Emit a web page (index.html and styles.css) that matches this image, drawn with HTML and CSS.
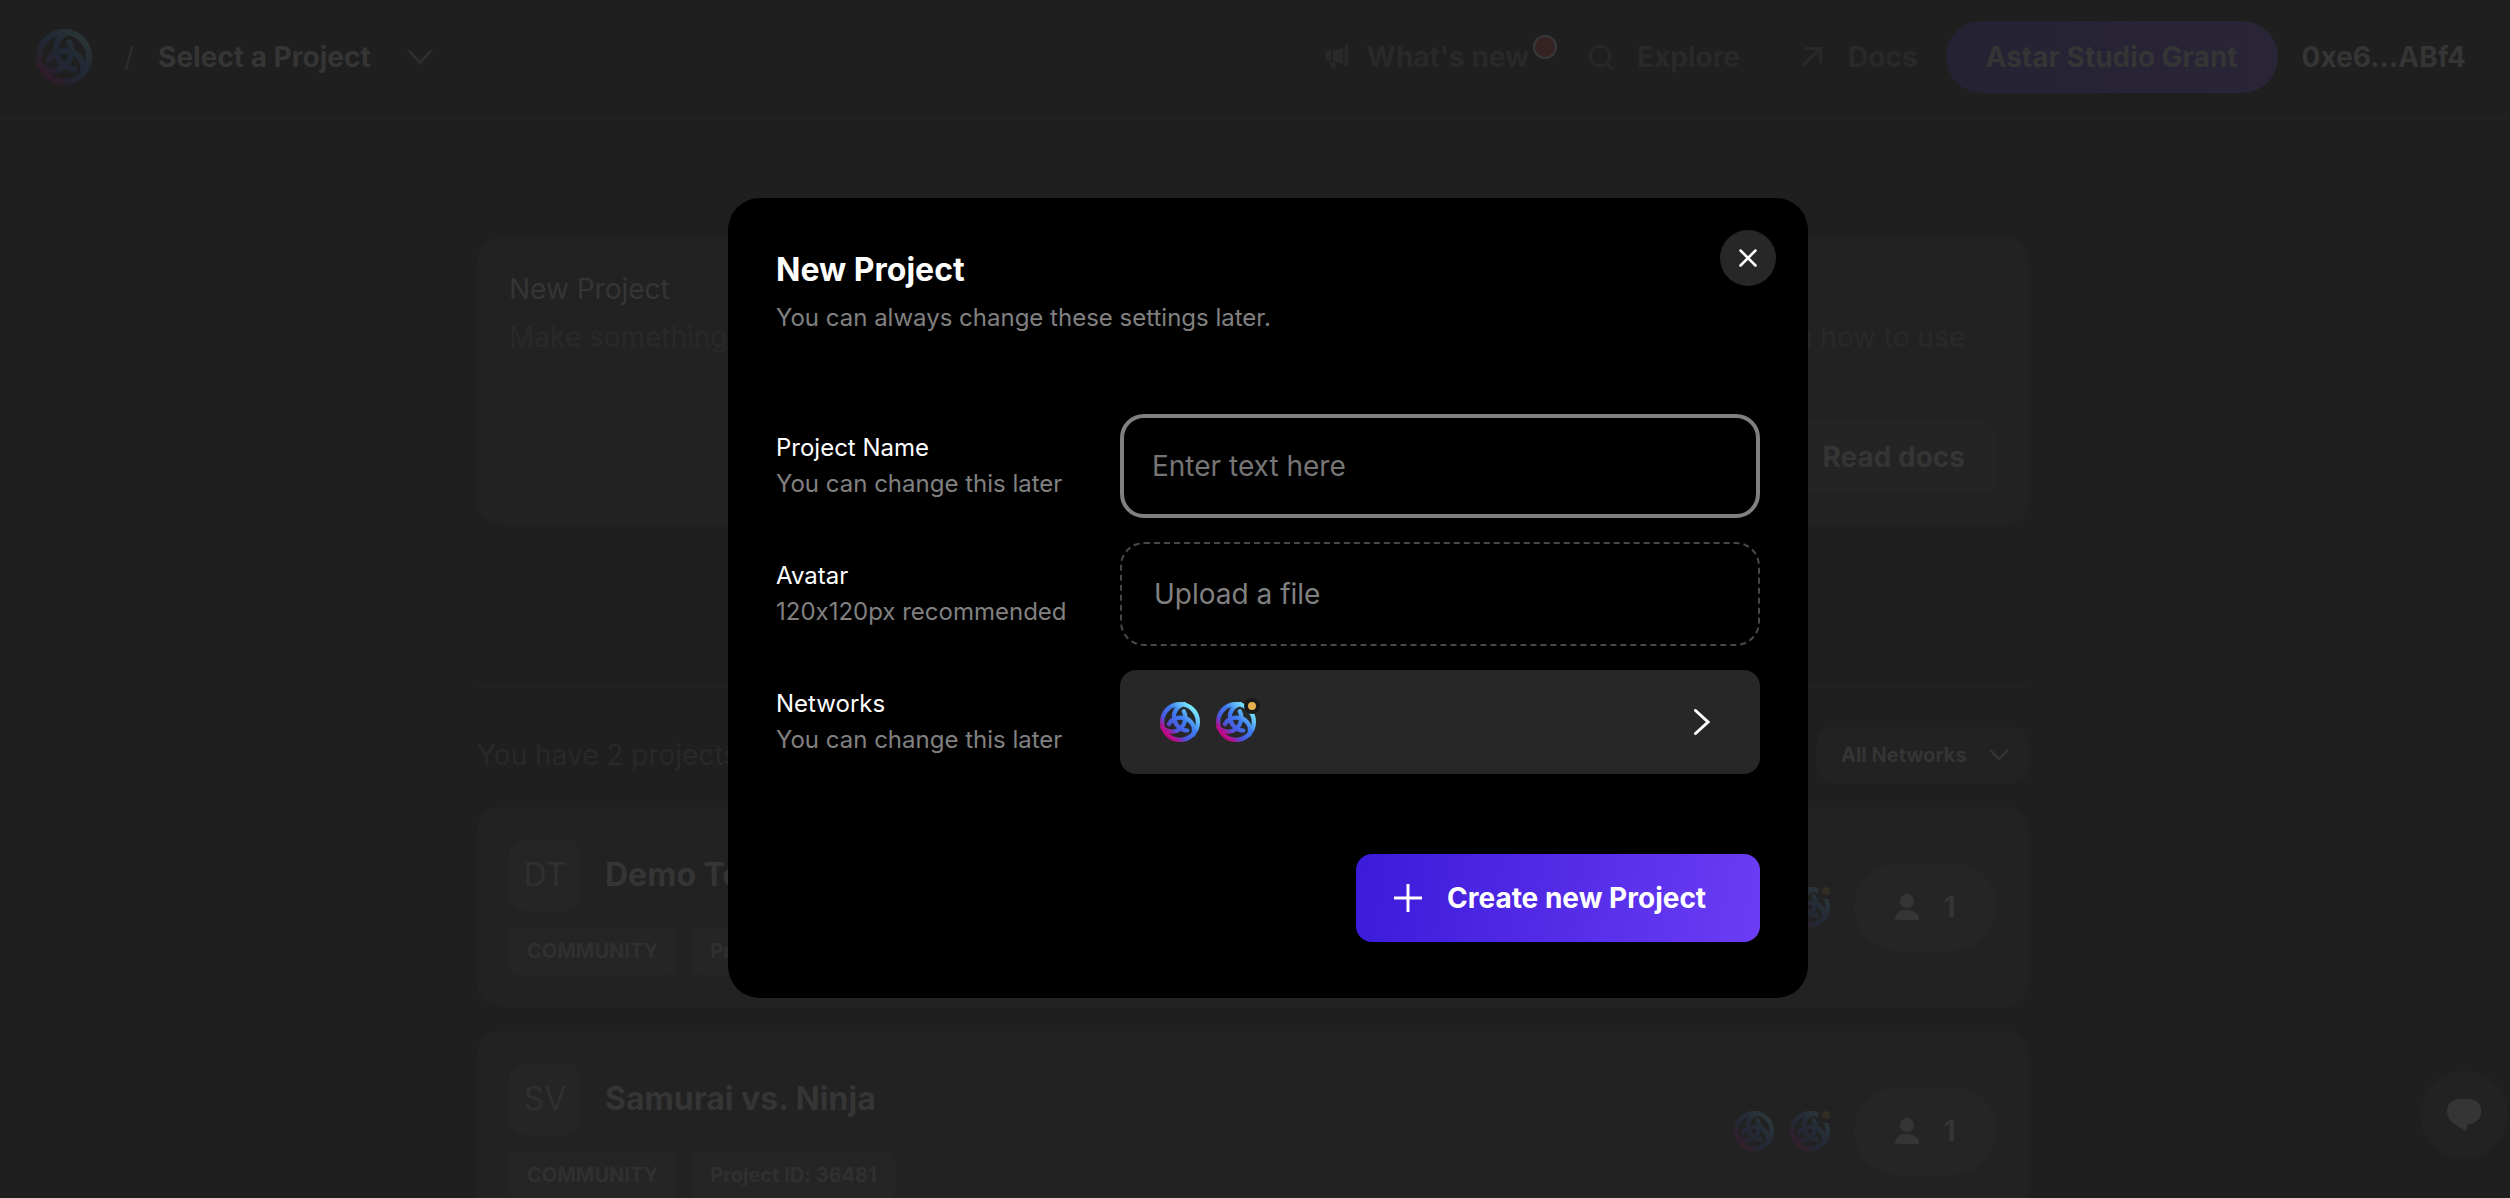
FILE: index.html
```html
<!DOCTYPE html>
<html lang="en">
<head>
<meta charset="utf-8">
<meta name="viewport" content="width=device-width, initial-scale=1">
<title>New Project</title>
<link rel="stylesheet" href="styles.css">
</head>
<body>
<svg class="defs" aria-hidden="true">
  <defs>
    <linearGradient id="astar-fill" x1="0.12" y1="0.88" x2="0.85" y2="0.15">
      <stop offset="0" stop-color="#c4007a"/>
      <stop offset="0.14" stop-color="#b5108f"/>
      <stop offset="0.32" stop-color="#4a55dd"/>
      <stop offset="0.62" stop-color="#3f7df0"/>
      <stop offset="1" stop-color="#7df0ff"/>
    </linearGradient>
    <path id="astar-arm" d="M6 -25C-6 -22 -10 -12 -8 -3C-6 5 2 12 10.300 12" fill="none" stroke-linecap="round"/>
    <mask id="astar-mask" maskUnits="userSpaceOnUse" x="-28" y="-28" width="56" height="56">
      <circle r="25" fill="none" stroke="#fff" stroke-width="6"/>
      <g stroke="#fff" stroke-width="6">
        <use href="#astar-arm"/>
        <use href="#astar-arm" transform="rotate(120)"/>
        <use href="#astar-arm" transform="rotate(240)"/>
      </g>
    </mask>
    <symbol id="astar" viewBox="-28 -28 56 56">
      <rect x="-28" y="-28" width="56" height="56" fill="url(#astar-fill)" mask="url(#astar-mask)"/>
    </symbol>
    <symbol id="chevron" viewBox="0 0 26 16">
      <path d="M1.500 1.500L13 13.500L24.500 1.500" fill="none" stroke="currentColor" stroke-width="3"/>
    </symbol>
    <symbol id="person" viewBox="0 0 24 26">
      <circle cx="12" cy="7" r="7" fill="currentColor"/>
      <path d="M0 26C0 19 5 16 12 16S24 19 24 26Z" fill="currentColor"/>
    </symbol>
  </defs>
</svg>

<header class="topbar">
  <a class="brand" href="#" aria-label="Home"><svg class="brand-logo"><use href="#astar"/></svg></a>
  <span class="slash">/</span>
  <button class="picker" type="button">Select a Project <svg class="picker-icon"><use href="#chevron"/></svg></button>
  <nav class="nav">
    <a class="nav-link news" href="#">
      <svg class="nav-icon" viewBox="0 0 24 24"><path d="M0 11C0 7 2 5 6 5V16C2 16 0 14 0 11ZM7.500 5.500L18 3V19L7.500 16.500ZM19.500 1.500a2 2 0 0 1 4 0V19.500a2 2 0 0 1-4 0ZM4 17.500H9.500L11 21.500C11 23.500 8.500 24 7.500 23Z" fill="currentColor"/></svg>
      <span class="news-text">What's new<span class="badge"></span></span>
    </a>
    <a class="nav-link" href="#">
      <svg class="nav-icon" viewBox="0 0 24 24"><g fill="none" stroke="currentColor" stroke-width="2.500"><circle cx="11" cy="11" r="9.700"/><path d="M17.500 18L23.500 24"/></g></svg>
      Explore
    </a>
    <a class="nav-link" href="#">
      <svg class="nav-icon" viewBox="0 0 24 24"><path d="M5 3.500H20.500V18M20.500 3.500L2 21" fill="none" stroke="currentColor" stroke-width="3"/></svg>
      Docs
    </a>
    <a class="grant" href="#">Astar Studio Grant</a>
    <button class="account" type="button">0xe6...ABf4</button>
  </nav>
</header>

<main class="page">
  <section class="intro">
    <article class="intro-card">
      <h2>New Project</h2>
      <p>Make something new</p>
    </article>
    <article class="intro-card intro-docs">
      <h2>Docs</h2>
      <p>Learn how to use</p>
      <a class="read-docs" href="#">Read docs</a>
    </article>
  </section>

  <section class="projects">
    <div class="projects-bar">
      <p>You have 2 projects</p>
      <button class="filter" type="button">All Networks <svg class="filter-icon"><use href="#chevron"/></svg></button>
    </div>
    <article class="project">
      <div class="project-info">
        <div class="project-title"><span class="avatar">DT</span><h3>Demo Test</h3></div>
        <div class="tags"><span class="tag">COMMUNITY</span><span class="tag">Project ID</span></div>
      </div>
      <div class="project-side">
        <div class="nets dim"><svg class="net"><use href="#astar"/></svg><span class="testnet"><svg class="net"><use href="#astar"/></svg></span></div>
        <span class="members"><svg class="members-icon"><use href="#person"/></svg>1</span>
      </div>
    </article>
    <article class="project">
      <div class="project-info">
        <div class="project-title"><span class="avatar">SV</span><h3>Samurai vs. Ninja</h3></div>
        <div class="tags"><span class="tag">COMMUNITY</span><span class="tag">Project ID: 36481</span></div>
      </div>
      <div class="project-side">
        <div class="nets dim"><svg class="net"><use href="#astar"/></svg><span class="testnet"><svg class="net"><use href="#astar"/></svg></span></div>
        <span class="members"><svg class="members-icon"><use href="#person"/></svg>1</span>
      </div>
    </article>
  </section>
</main>

<button class="chat" type="button" aria-label="Chat">
  <svg class="chat-icon" viewBox="0 0 34 34"><path d="M12 1H22A12 12 0 0 1 22 26H20V33C12 29 0 24 0 13A12 12 0 0 1 12 1Z" fill="currentColor"/></svg>
</button>

<div class="overlay">
  <form class="modal" role="dialog" aria-labelledby="modal-title">
    <button class="close" type="button" aria-label="Close">
      <svg class="close-icon" viewBox="0 0 18 18"><path d="M1.500 1.500L16.500 16.500M16.500 1.500L1.500 16.500" stroke="currentColor" stroke-width="2.500" stroke-linecap="round"/></svg>
    </button>
    <h1 id="modal-title">New Project</h1>
    <p class="lead">You can always change these settings later.</p>
    <div class="fields">
      <div class="field">
        <label for="name">Project Name<small>You can change this later</small></label>
        <input id="name" class="text-input" type="text" placeholder="Enter text here">
      </div>
      <div class="field">
        <label for="avatar">Avatar<small>120x120px recommended</small></label>
        <div class="upload">Upload a file<input id="avatar" type="file"></div>
      </div>
      <div class="field">
        <label for="networks">Networks<small>You can change this later</small></label>
        <button id="networks" class="networks" type="button">
          <span class="nets"><svg class="net"><use href="#astar"/></svg><span class="testnet"><svg class="net"><use href="#astar"/></svg></span></span>
          <svg class="next-icon" viewBox="0 0 16 26"><path d="M1.500 1.500L14 13L1.500 24.500" fill="none" stroke="currentColor" stroke-width="3" stroke-linecap="round"/></svg>
        </button>
      </div>
    </div>
    <button class="create" type="submit">
      <svg class="plus" viewBox="0 0 30 30"><path d="M15 1V29M1 15H29" stroke="currentColor" stroke-width="3"/></svg>
      Create new Project
    </button>
  </form>
</div>
</body>
</html>
```
FILE: styles.css
```css
:root {
  --bg: #1f1f1f;
  --card: #222222;
  --chip: #252525;
  --line: #222222;
  --text: #353535;
  --muted: #292929;
  --field: #272727;
  --grey: #808080;
}

*, *::before, *::after { box-sizing: border-box; }

body {
  margin: 0;
  height: 100vh;
  overflow: hidden;
  background: var(--bg);
  color: var(--text);
  font: 400 28px/48px Inter, "Liberation Sans", sans-serif;
  font-variant-ligatures: no-contextual;
}

h1, h2, h3, p { margin: 0; font-size: inherit; font-weight: 400; }
a { color: inherit; text-decoration: none; }
button { border: 0; padding: 0; background: none; color: inherit; font: inherit; cursor: pointer; }
button, input { font-variant-ligatures: no-contextual; }
svg { display: block; flex: none; }
.defs { position: absolute; width: 0; height: 0; }

/* Top bar */
.topbar {
  display: flex;
  align-items: center;
  padding: 21px 44px 24px 36px;
  border-bottom: 2px solid var(--line);
  font-weight: 700;
}
.brand-logo { width: 56px; height: 56px; opacity: 0.1; }
.slash { margin: 0 24px 0 32px; color: #2d2d2d; font-weight: 400; }
.picker { display: flex; align-items: center; gap: 36px; font-weight: 700; }
.picker-icon { width: 26px; height: 16px; color: #2d2d2d; }
.nav { display: flex; align-items: center; margin-left: auto; }
.nav-link { display: flex; align-items: center; gap: 24px; color: var(--muted); }
.nav-link + .nav-link { margin-left: 60px; }
.nav-icon { width: 24px; height: 24px; overflow: visible; }
.nav-link.news { gap: 18px; }
.news-text { position: relative; }
.badge {
  position: absolute;
  top: 2px;
  right: -28px;
  width: 24px;
  height: 24px;
  border: 2px solid #383838;
  border-radius: 50%;
  background: #352222;
}
.grant {
  margin-left: 28px;
  padding: 12px 40px;
  border-radius: 36px;
  background: linear-gradient(90deg, #252233, #2a2536);
}
.account { margin-left: 24px; font-weight: 700; }

/* Page */
.page { max-width: 1556px; margin: 118px auto 0; padding-right: 4px; }
.intro { display: grid; grid-template-columns: 1fr 1fr; background: var(--card); border-radius: 24px; min-height: 288px; }
.intro-card { padding: 28px 32px 32px; }
.intro-card p { color: var(--muted); }
.intro-docs { display: flex; flex-direction: column; align-items: flex-end; }
.intro-docs h2 { align-self: flex-start; }
.intro-docs p { margin-right: 32px; }
.read-docs {
  margin-top: 60px;
  padding: 12px 32px;
  border-radius: 16px;
  background: #242424;
  font-weight: 700;
}

.projects { display: grid; gap: 24px; margin-top: 160px; padding-top: 40px; border-top: 2px solid var(--line); }
.projects-bar { display: flex; align-items: center; justify-content: space-between; color: var(--muted); }
.filter {
  display: flex;
  align-items: center;
  justify-content: space-between;
  width: 212px;
  height: 56px;
  padding: 0 20px 0 24px;
  border-radius: 16px;
  background: var(--card);
  color: var(--text);
  font-size: 20px;
  font-weight: 700;
}
.filter-icon { width: 20px; height: 12px; }
.project {
  display: flex;
  align-items: center;
  justify-content: space-between;
  padding: 32px;
  border-radius: 24px;
  background: var(--card);
}
.project-info { display: grid; gap: 16px; }
.project-title { display: flex; align-items: center; gap: 24px; font-size: 32px; }
.project-title h3 { font-weight: 700; }
.avatar {
  display: grid;
  place-items: center;
  width: 72px;
  height: 72px;
  border-radius: 16px;
  background: var(--chip);
  color: #303030;
}
.tags { display: flex; gap: 16px; }
.tag {
  padding: 0 18px;
  border-radius: 8px;
  background: var(--chip);
  color: #303030;
  font-size: 20px;
  font-weight: 700;
}
.project-side { display: flex; align-items: center; gap: 24px; }
.members {
  display: flex;
  align-items: center;
  justify-content: center;
  gap: 24px;
  width: 143px;
  height: 88px;
  border-radius: 44px;
  background: #252525;
  font-weight: 700;
}
.members-icon { width: 24px; height: 26px; }

.nets { display: flex; gap: 16px; }
.net { width: 40px; height: 40px; }
.dim .net { opacity: 0.1; }
.testnet { position: relative; }
.testnet::after {
  content: "";
  position: absolute;
  top: -4px;
  right: -4px;
  width: 16px;
  height: 16px;
  border: 4px solid #1a1a1a;
  border-radius: 50%;
  background: #e5b04c;
}
.dim .testnet::after { border-color: var(--card); background: #332e22; }

.chat {
  position: fixed;
  right: 2px;
  bottom: 39px;
  display: grid;
  place-items: center;
  width: 88px;
  height: 88px;
  border-radius: 50%;
  background: var(--card);
}
.chat-icon { width: 34px; height: 34px; }

/* New project dialog */
.overlay {
  position: fixed;
  inset: 0;
  display: grid;
  place-items: center;
  padding: 0 0 2px 26px;
}
.modal {
  position: relative;
  display: flex;
  flex-direction: column;
  width: 100%;
  max-width: 1080px;
  padding: 48px 48px 56px;
  border-radius: 32px;
  background: #000;
  color: #fff;
}
.modal h1 { font-size: 32px; font-weight: 700; }
.lead { color: var(--grey); font-size: 24px; }
.close {
  position: absolute;
  top: 32px;
  right: 32px;
  display: grid;
  place-items: center;
  width: 56px;
  height: 56px;
  border-radius: 50%;
  background: var(--field);
}
.close-icon { width: 18px; height: 18px; }
.fields { display: grid; gap: 24px; margin-top: 72px; }
.field { display: grid; grid-template-columns: 1fr 640px; align-items: center; }
.field label { font-size: 24px; line-height: 36px; }
.field small { display: block; color: var(--grey); font-size: 24px; }
.text-input {
  width: 100%;
  height: 104px;
  padding: 0 28px;
  border: 4px solid var(--grey);
  border-radius: 24px;
  outline: 0;
  background: #000;
  color: #fff;
  font: inherit;
}
.text-input::placeholder { color: #757575; opacity: 1; }
.upload {
  position: relative;
  display: flex;
  align-items: center;
  height: 104px;
  padding: 0 32px;
  border: 2px dashed #484848;
  border-radius: 24px;
  color: var(--grey);
}
.upload input { position: absolute; inset: 0; width: 100%; opacity: 0; }
.networks {
  display: flex;
  align-items: center;
  justify-content: space-between;
  height: 104px;
  padding: 0 50px 0 40px;
  border-radius: 16px;
  background: var(--field);
}
.next-icon { width: 16px; height: 26px; }
.create {
  display: flex;
  align-items: center;
  align-self: flex-end;
  gap: 24px;
  width: 404px;
  height: 88px;
  margin-top: 80px;
  padding-left: 37px;
  border-radius: 16px;
  background: linear-gradient(100deg, #3b1ada, #6b3df5);
  font-weight: 700;
}
.plus { width: 30px; height: 30px; }
```
